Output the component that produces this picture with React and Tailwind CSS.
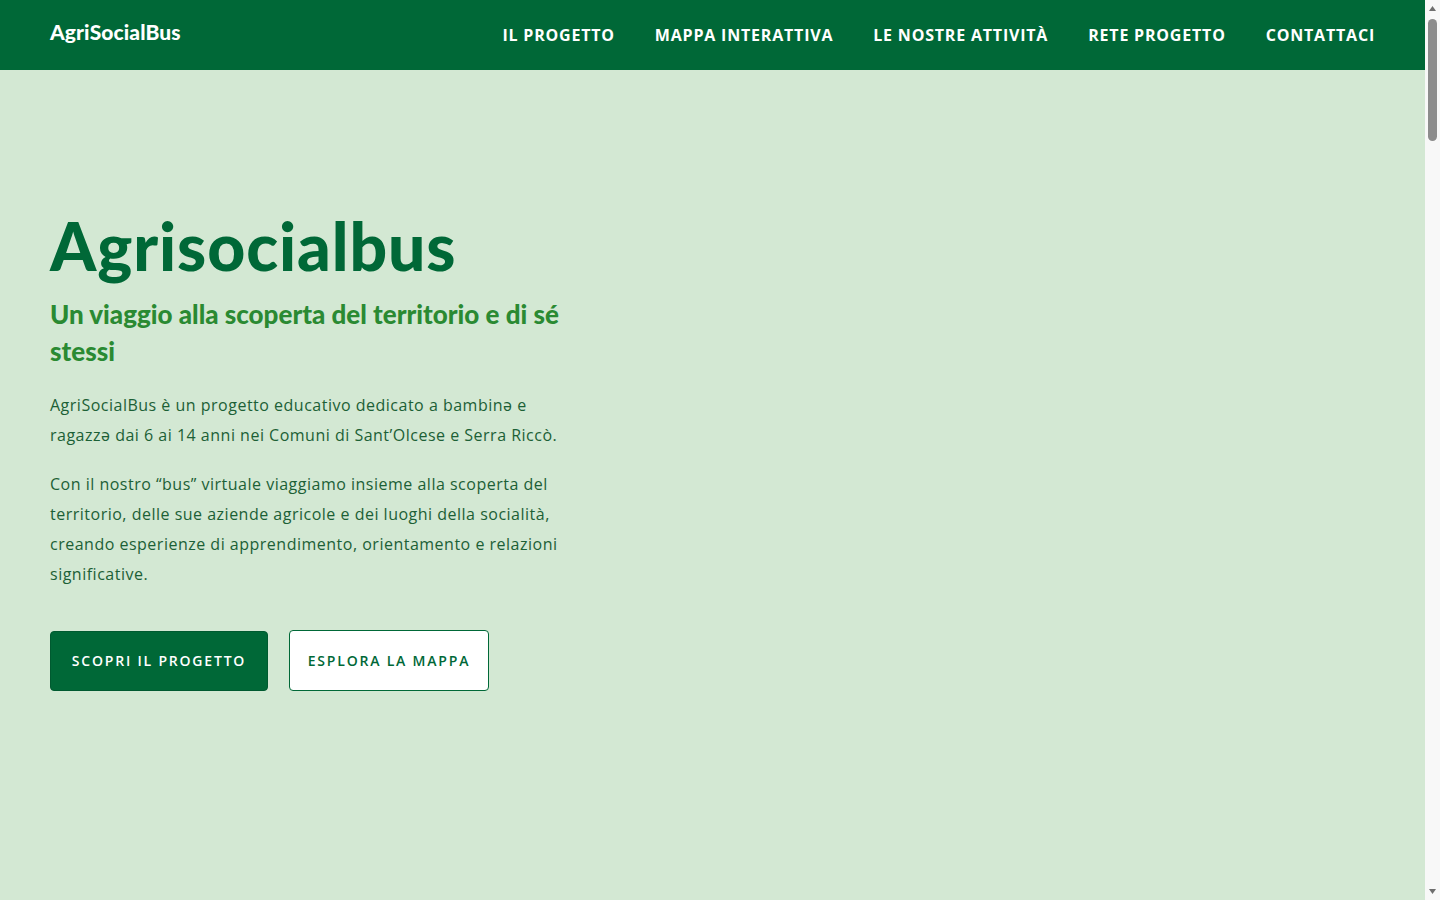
import { useState } from 'react'

const NAV_LINKS = [
  'Il progetto',
  'Mappa interattiva',
  'Le nostre attività',
  'Rete progetto',
  'Contattaci',
]

// ── Header ───────────────────────────────────────────────────────────────────
function Header() {
  return (
    <header className="bg-[#006837] h-[70px] flex items-center justify-between px-[50px]">
      <a href="#" className="font-['Lato',sans-serif] text-white text-[21px] font-black tracking-[0.1px] -mt-[7px]">
        AgriSocialBus
      </a>
      <nav className="flex items-center gap-[40px]">
        {NAV_LINKS.map((label) => (
          <a
            key={label}
            href="#"
            className="font-['Open_Sans',sans-serif] text-white text-[16px] font-bold uppercase tracking-[0.8px]"
          >
            {label}
          </a>
        ))}
      </nav>
    </header>
  )
}

// ── Hero ─────────────────────────────────────────────────────────────────────
function Hero() {
  const [hover, setHover] = useState(null)

  return (
    <section className="px-[50px] pt-[140px] pb-[200px]">
      <div className="w-[530px]">
        <h1 className="font-['Lato',sans-serif] text-[#006837] text-[66px] leading-[72px] font-black tracking-[0.9px]">
          Agrisocialbus
        </h1>
        <h2 className="font-['Lato',sans-serif] mt-[14px] text-[#2a8a32] text-[26px] leading-[37px] font-black">
          Un viaggio alla scoperta del territorio e di sé stessi
        </h2>

        <div className="font-['Open_Sans',sans-serif] mt-[20px] text-[#1c6036] text-[16px] leading-[30px] tracking-[0.5px] flex flex-col gap-[19px]">
          <p>
            AgriSocialBus è un progetto educativo dedicato a bambinə e ragazzə dai 6 ai 14 anni nei Comuni di
            Sant’Olcese e Serra Riccò.
          </p>
          <p>
            Con il nostro “bus” virtuale viaggiamo insieme alla scoperta del territorio, delle sue aziende agricole
            e dei luoghi della socialità, creando esperienze di apprendimento, orientamento e relazioni
            significative.
          </p>
        </div>

        <div className="font-['Open_Sans',sans-serif] mt-[41px] flex items-center gap-[21px]">
          <a
            href="#"
            onMouseEnter={() => setHover('scopri')}
            onMouseLeave={() => setHover(null)}
            className={`h-[60px] w-[218px] flex items-center justify-center rounded-[4px] border border-[#005a30] text-white text-[14px] font-semibold uppercase tracking-[1.8px] ${
              hover === 'scopri' ? 'bg-[#00552d]' : 'bg-[#006837]'
            }`}
          >
            Scopri il progetto
          </a>
          <a
            href="#"
            onMouseEnter={() => setHover('mappa')}
            onMouseLeave={() => setHover(null)}
            className={`h-[61px] w-[200px] flex items-center justify-center rounded-[4px] border border-[#006837] text-[#006837] text-[14px] font-semibold uppercase tracking-[1.8px] ${
              hover === 'mappa' ? 'bg-[#eef6ee]' : 'bg-white'
            }`}
          >
            Esplora la mappa
          </a>
        </div>
      </div>
    </section>
  )
}

// ── Scrollbar track ──────────────────────────────────────────────────────────
function ScrollTrack() {
  return (
    <div className="w-[15px] shrink-0 bg-[#f8f8f8] flex flex-col items-center">
      <svg width="9" height="15" viewBox="0 0 9 15" className="mt-[1px]">
        <path d="M4.5 5 L8 10 L1 10 Z" fill="#6e6e6e" />
      </svg>
      <div className="mt-[3px] w-[9px] h-[122px] rounded-full bg-[#8c8c8c]" />
      <div className="flex-1" />
      <svg width="9" height="15" viewBox="0 0 9 15" className="mb-[1px]">
        <path d="M1 5 L8 5 L4.5 10 Z" fill="#6e6e6e" />
      </svg>
    </div>
  )
}

// ── App ──────────────────────────────────────────────────────────────────────
export default function App() {
  return (
    <div className="flex h-screen overflow-hidden">
      <div className="flex-1 overflow-y-auto [scrollbar-width:none] bg-[#d3e8d3]">
        <div className="min-h-[6400px]">
          <Header />
          <main>
            <Hero />
          </main>
        </div>
      </div>
      <ScrollTrack />
    </div>
  )
}
